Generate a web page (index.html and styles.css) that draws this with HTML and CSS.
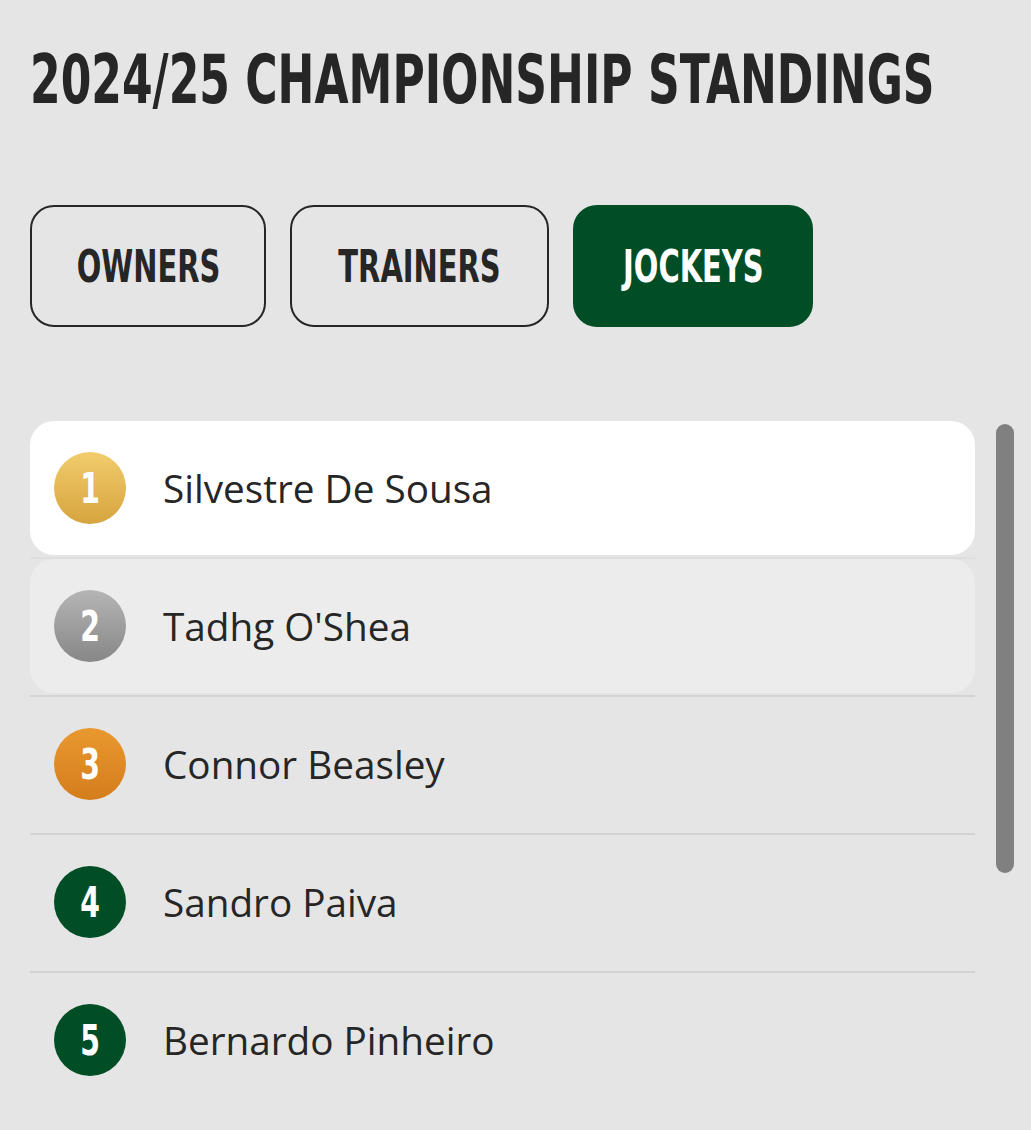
FILE: index.html
```html
<!DOCTYPE html>
<html lang="en">
<head>
    <meta charset="UTF-8">
    <meta name="viewport" content="width=device-width, initial-scale=1.0">
    <title>Championship Standings</title>
    <link rel="stylesheet" href="styles.css">
</head>
<body>
    <div class="standings">
        <h1 class="title"><span>2024/25 Championship Standings</span></h1>

        <!-- Category tabs -->
        <div class="tabs">
            <button class="tab tab-owners"><span>Owners</span></button>
            <button class="tab tab-trainers"><span>Trainers</span></button>
            <button class="tab tab-jockeys active"><span>Jockeys</span></button>
        </div>

        <!-- Ranking list with its scrollbar -->
        <div class="list-wrap">
            <ul class="ranking">
                <li class="rank-row">
                    <div class="rank-inner first">
                        <span class="pos gold"><span>1</span></span>
                        <span class="name">Silvestre De Sousa</span>
                    </div>
                </li>
                <li class="rank-row">
                    <div class="rank-inner hover">
                        <span class="pos silver"><span>2</span></span>
                        <span class="name">Tadhg O'Shea</span>
                    </div>
                </li>
                <li class="rank-row">
                    <div class="rank-inner">
                        <span class="pos bronze"><span>3</span></span>
                        <span class="name">Connor Beasley</span>
                    </div>
                </li>
                <li class="rank-row">
                    <div class="rank-inner">
                        <span class="pos"><span>4</span></span>
                        <span class="name">Sandro Paiva</span>
                    </div>
                </li>
                <li class="rank-row">
                    <div class="rank-inner">
                        <span class="pos"><span>5</span></span>
                        <span class="name">Bernardo Pinheiro</span>
                    </div>
                </li>
            </ul>
            <div class="scrollbar"></div>
        </div>
    </div>
</body>
</html>
```

FILE: styles.css
```css
body {
    margin: 0;
    background-color: #e5e5e5;
    font-family: "Open Sans", Arial, sans-serif;
    color: #262626;
}

.standings {
    padding: 30px 0 0 30px;
}

/* condensed headline face */
.title,
.tab,
.pos {
    font-family: "Liberation Sans Narrow", "DejaVu Sans Condensed", "Liberation Sans", sans-serif;
    font-weight: bold;
    text-transform: uppercase;
}

.title {
    margin: 0;
    font-size: 68px;
    line-height: 100px;
    white-space: nowrap;
    overflow: hidden;
    color: #262626;
}

.title span {
    display: inline-block;
    transform: scaleX(0.72);
    transform-origin: left center;
}

.tabs {
    display: flex;
    gap: 24px;
    margin-top: 75px;
}

.tab {
    height: 122px;
    box-sizing: border-box;
    border: 2.5px solid #262626;
    border-radius: 24px;
    background: transparent;
    color: #262626;
    font-size: 45px;
    padding: 0;
    display: flex;
    align-items: center;
    justify-content: center;
    white-space: nowrap;
    cursor: pointer;
}

.tab span {
    display: inline-block;
    transform: scaleX(0.715);
}

.tab-owners { width: 236px; }
.tab-trainers { width: 259px; }
.tab-jockeys { width: 240px; }

.tab.active {
    background-color: #014d26;
    border-color: #014d26;
    color: #fff;
}

.list-wrap {
    display: flex;
    align-items: flex-start;
    gap: 21px;
    margin-top: 94px;
}

.ranking {
    list-style: none;
    margin: 0;
    padding: 0;
    width: 945px;
}

.rank-row {
    padding-bottom: 2px;
    border-bottom: 2px solid #d3d3d3;
}

.rank-row:first-child {
    border-bottom-color: #dedede;
}

.rank-row:last-child {
    border-bottom: none;
}

.rank-inner {
    height: 134px;
    display: flex;
    align-items: center;
    gap: 37px;
    padding-left: 24px;
    border-radius: 24px;
}

.rank-inner.first {
    background-color: #fff;
}

.rank-inner.hover {
    background-color: #ececec;
}

.pos {
    width: 72px;
    height: 72px;
    border-radius: 50%;
    background-color: #014d26;
    color: #fff;
    font-size: 42px;
    display: flex;
    align-items: center;
    justify-content: center;
    flex-shrink: 0;
}

.pos span {
    display: inline-block;
    transform: scaleX(0.75);
}

.pos.gold {
    background: linear-gradient(#f2cc6c, #d6a43e);
}

.pos.silver {
    background: linear-gradient(#b5b5b5, #878787);
}

.pos.bronze {
    background: linear-gradient(#e9982f, #d47d1d);
}

.name {
    font-size: 38.7px;
}

.scrollbar {
    width: 18px;
    height: 449px;
    margin-top: 3px;
    border-radius: 9px;
    background-color: #808080;
}
```
